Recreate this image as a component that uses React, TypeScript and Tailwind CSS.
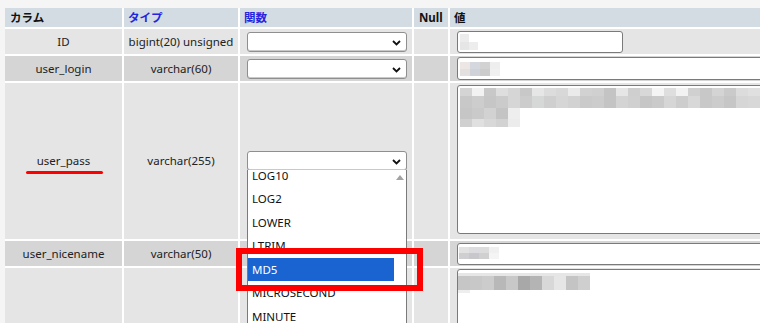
import React from "react";

const font = { fontFamily: '"Noto Sans", "Noto Sans CJK JP", sans-serif' };

function Chevron() {
  return (
    <svg width="9" height="6" viewBox="0 0 9 6" className="absolute right-[5px] top-[7px]">
      <path d="M1 1 L4.5 4.5 L8 1" fill="none" stroke="#111" strokeWidth="1.8" />
    </svg>
  );
}

function FakeSelect() {
  return (
    <div className="relative ml-[7px] h-[20px] w-[160px] rounded-[3px] border border-[#8f8f8f] bg-white shadow-[inset_0_-1px_0_#c9c9c9]">
      <Chevron />
    </div>
  );
}

function Mosaic({ rows, cell = 12, h = 8 }: { rows: string[][]; cell?: number; h?: number }) {
  return (
    <div className="flex flex-col">
      {rows.map((r, i) => (
        <div key={i} className="flex">
          {r.map((c, j) => (
            <div key={j} className={c} style={{ width: cell, height: h }} />
          ))}
        </div>
      ))}
    </div>
  );
}

const mosaicTop = [
  ["bg-[#d4d4d4]", "bg-[#f2f2f2]", "bg-[#c8c8c8]", "bg-[#dedede]", "bg-[#d6d6d6]", "bg-[#c8c8c8]", "bg-[#e6e6e6]", "bg-[#dcdcdc]", "bg-[#d8d8d8]", "bg-[#eaeaea]", "bg-[#d2d2d2]", "bg-[#d0d0d0]", "bg-[#c4c4c4]", "bg-[#e6e6e6]", "bg-[#cfcfcf]", "bg-[#d8d8d8]", "bg-[#f4f4f4]", "bg-[#dedede]", "bg-[#f2f2f2]", "bg-[#d0d0d0]", "bg-[#c8c8c8]", "bg-[#d4d4d4]", "bg-[#cacaca]", "bg-[#dcdcdc]", "bg-[#e0e0e0]", "bg-[#d2d2d2]"],
  ["bg-[#c8c8c8]", "bg-[#cdcdcd]", "bg-[#c6c6c6]", "bg-[#cbcbcb]", "bg-[#d6d6d6]", "bg-[#cccccc]", "bg-[#d6d8d8]", "bg-[#cfcfcf]", "bg-[#d6d6d6]", "bg-[#d2d2d2]", "bg-[#cacaca]", "bg-[#cccccc]", "bg-[#c4c4c4]", "bg-[#d4d4d4]", "bg-[#d0d0d0]", "bg-[#c6c6c6]", "bg-[#cacaca]", "bg-[#d6d6d6]", "bg-[#cdcdcd]", "bg-[#d8d8d8]", "bg-[#c8c8c8]", "bg-[#cccccc]", "bg-[#c6c6c6]", "bg-[#d6d6d6]", "bg-[#d8d8d8]", "bg-[#d0d0d0]"],
  ["bg-[#c6c6c6]", "bg-[#cacaca]", "bg-[#d2d2d2]", "bg-[#c4c4c4]", "bg-[#eeeeee]"],
  ["bg-[#d0d0d0]", "bg-[#e0e0e0]", "bg-[#d8d8d8]", "bg-[#d2d2d2]", "bg-[#ececec]"],
];

const items = ["LOG10", "LOG2", "LOWER", "LTRIM", "MD5", "MICROSECOND", "MINUTE", "MOD"];

export default function App() {
  return (
    <div className="relative h-[323px] w-[760px] overflow-hidden bg-[#f5f5f5] pl-[5px] pt-[8px] text-[11.5px] text-[#222]" style={font}>
      <div className="grid w-[820px] grid-cols-[117px_114px_172px_34px_381px] grid-rows-[19px_25px_25px_156px_25px_60px] gap-[2px] bg-white">
        {/* header */}
        <div className="flex items-center bg-[#d3dce3] pl-[5px] font-bold text-[#111]">カラム</div>
        <div className="flex items-center bg-[#d3dce3] pl-[4px] font-bold text-[#2424e0]">タイプ</div>
        <div className="flex items-center bg-[#d3dce3] pl-[4px] font-bold text-[#2424e0]">関数</div>
        <div className="flex items-center bg-[#d3dce3] pl-[5px] font-bold text-[#111]">Null</div>
        <div className="flex items-center bg-[#d3dce3] pl-[4px] font-bold text-[#111]">値</div>

        {/* row 1 */}
        <div className="flex items-center justify-center bg-[#e5e5e5]">ID</div>
        <div className="flex items-center justify-center bg-[#e5e5e5]">bigint(20) unsigned</div>
        <div className="flex items-center bg-[#e5e5e5]"><FakeSelect /></div>
        <div className="bg-[#e5e5e5]" />
        <div className="flex items-center bg-[#e5e5e5]">
          <div className="ml-[7px] flex h-[22px] w-[166px] items-center rounded-[3px] border border-[#7a7a7a] bg-white pl-[2px]">
            <Mosaic rows={[["bg-[#ececec]", "bg-white"], ["bg-[#e6e6e6]", "bg-[#ededed]"]]} cell={9} h={8} />
          </div>
        </div>

        {/* row 2 */}
        <div className="flex items-center justify-center bg-[#d5d5d5]">user_login</div>
        <div className="flex items-center justify-center bg-[#d5d5d5]">varchar(60)</div>
        <div className="flex items-center bg-[#d5d5d5]"><FakeSelect /></div>
        <div className="bg-[#d5d5d5]" />
        <div className="flex items-center bg-[#d5d5d5]">
          <div className="ml-[7px] flex h-[23px] w-[360px] items-center rounded-[3px] border border-[#7a7a7a] bg-white pl-[2px]">
            <Mosaic rows={[["bg-[#ece6e4]", "bg-[#d4d8de]", "bg-[#d2d2d2]", "bg-[#eeeeee]"], ["bg-[#e4e0e0]", "bg-[#cfd2d8]", "bg-[#cccccc]", "bg-[#f0f0f0]"]]} cell={10} h={7} />
          </div>
        </div>

        {/* row 3 */}
        <div className="relative flex items-center justify-center bg-[#e5e5e5]">
          <span>user_pass</span>
          <div className="absolute left-[21px] top-[88px] h-[3px] w-[77px] rounded-full bg-[#ff0000]" />
        </div>
        <div className="flex items-center justify-center bg-[#e5e5e5]">varchar(255)</div>
        <div className="relative z-10 flex items-center bg-[#e5e5e5]">
          <div className="relative">
            <FakeSelect />
            <div className="absolute left-[7px] top-[19px] flex h-[170px] w-[160px] overflow-hidden border-x border-[#7a7a7a] bg-white">
              <div className="-mt-[6.5px] w-[147px]">
                {items.map((it) => (
                  <div
                    key={it}
                    className={
                      it === "MD5"
                        ? "flex h-[23.5px] items-center bg-[#1a64d2] pl-[4px] text-[11.5px] text-white"
                        : "flex h-[23.5px] items-center pl-[4px] text-[11.5px] text-[#111]"
                    }
                  >
                    {it}
                  </div>
                ))}
              </div>
              <div className="flex w-[12px] justify-center bg-white pt-[5px]">
                <svg width="8" height="5" viewBox="0 0 8 5">
                  <path d="M0 5 L4 0 L8 5 Z" fill="#a3a3a3" />
                </svg>
              </div>
            </div>
          </div>
        </div>
        <div className="bg-[#e5e5e5]" />
        <div className="bg-[#e5e5e5] pt-[2px]">
          <div className="ml-[7px] h-[149px] w-[360px] rounded-[3px] border border-[#7a7a7a] bg-white pl-[2px] pt-[2px]">
            <div className="flex flex-col">
              <Mosaic rows={[mosaicTop[0]]} cell={12} h={8} />
              <Mosaic rows={[mosaicTop[1]]} cell={12} h={12} />
              <Mosaic rows={[mosaicTop[2]]} cell={12} h={11} />
              <Mosaic rows={[mosaicTop[3]]} cell={12} h={8} />
            </div>
          </div>
        </div>

        {/* row 4 */}
        <div className="flex items-center justify-center bg-[#d5d5d5]">user_nicename</div>
        <div className="flex items-center justify-center bg-[#d5d5d5]">varchar(50)</div>
        <div className="bg-[#d5d5d5]" />
        <div className="bg-[#d5d5d5]" />
        <div className="flex items-center bg-[#d5d5d5]">
          <div className="ml-[7px] flex h-[22px] w-[360px] items-start rounded-[3px] border border-[#7a7a7a] bg-white pl-[1px] pt-[3px]">
            <Mosaic rows={[["bg-[#e2e2e2]", "bg-[#dcdce0]", "bg-[#dcdcdc]", "bg-[#f0f0f0]"], ["bg-[#cfcfd2]", "bg-[#c8c8cc]", "bg-[#d0d0d0]", "bg-[#f4f4f4]"]]} cell={10} h={6} />
          </div>
        </div>

        {/* row 5 */}
        <div className="bg-[#e5e5e5]" />
        <div className="bg-[#e5e5e5]" />
        <div className="bg-[#e5e5e5]" />
        <div className="bg-[#e5e5e5]" />
        <div className="bg-[#e5e5e5] pt-[1px]">
          <div className="ml-[7px] h-[80px] w-[360px] rounded-[3px] border border-[#7a7a7a] bg-white pt-[3px]">
            <Mosaic rows={[["bg-[#e6e6e6]", "bg-[#e6e6e6]", "bg-[#e6e6e6]", "bg-[#e6e6e6]", "bg-[#e6e6e6]", "bg-[#e6e6e6]", "bg-[#e6e6e6]", "bg-[#e6e6e6]", "bg-[#e6e6e6]", "bg-[#e6e6e6]", "bg-[#e6e6e6]"]]} cell={12} h={3} />
            <Mosaic rows={[["bg-[#c6c6c6]", "bg-[#c8c8c8]", "bg-[#cccccc]", "bg-[#b8b8b8]", "bg-[#c8c8c8]", "bg-[#a8a8a8]", "bg-[#b4b4b4]", "bg-[#d8d8d8]", "bg-[#e6e6e6]", "bg-[#c4c4c4]", "bg-[#cfcfcf]"]]} cell={12} h={14} />
            <Mosaic rows={[["bg-[#eeeeee]"]]} cell={12} h={3} />
          </div>
        </div>
      </div>

      {/* red highlight box */}
      <div className="absolute left-[236px] top-[248px] z-20 h-[43px] w-[187px] border-[6px] border-[#ff0000]" />
    </div>
  );
}
